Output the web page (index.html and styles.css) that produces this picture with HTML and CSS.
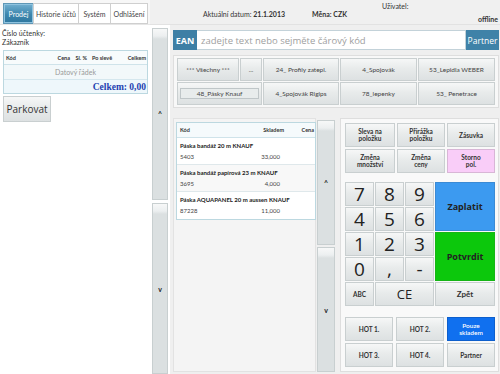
FILE: index.html
```html
<!DOCTYPE html>
<html lang="cs">
<head>
<meta charset="utf-8">
<title>Prodej</title>
<link rel="stylesheet" href="styles.css">
</head>
<body>
<div class="app">
  <header class="top">
    <nav class="tabs">
      <span class="tab active">Prodej</span>
      <span class="tab">Historie účtů</span>
      <span class="tab">Systém</span>
      <span class="tab">Odhlášení</span>
    </nav>
    <div class="info">
      <div class="date">Aktuální datum: <b>21.1.2013</b></div>
      <div class="cur"><b>Měna: CZK</b></div>
      <div class="user"><span>Uživatel:</span><b>offline</b></div>
    </div>
  </header>
  <div class="body">
    <aside class="left">
      <div class="meta">Číslo účtenky:</div>
      <div class="meta">Zákazník</div>
      <div class="bill">
        <div class="bill-head">
          <span class="c1">Kód</span><span class="c2">Cena</span><span class="c3">Sl. %</span><span class="c4">Po slevě</span><span class="c5">Celkem</span>
        </div>
        <div class="bill-row">Datový řádek</div>
        <div class="bill-foot">Celkem: 0,00</div>
      </div>
      <button class="btn park">Parkovat</button>
    </aside>
    <div class="scroll lscroll">
      <div class="sbtn">^</div>
      <div class="sbtn">v</div>
    </div>
    <main class="work">
      <div class="ean">
        <span class="ean-label">EAN</span>
        <span class="ean-input">zadejte text nebo sejměte čárový kód</span>
        <span class="partner">Partner</span>
      </div>
      <div class="cats">
        <button class="btn cat">*** Všechny ***</button>
        <button class="btn cat">...</button>
        <button class="btn cat">24_ Profily zatepl.</button>
        <button class="btn cat">4_Spojovák</button>
        <button class="btn cat">53_Lepidla WEBER</button>
        <button class="btn cat wide"><span class="sel">48_Pásky Knauf</span></button>
        <button class="btn cat">4_Spojovák Rigips</button>
        <button class="btn cat">78_lepenky</button>
        <button class="btn cat">53_ Penetrace</button>
      </div>
      <div class="lower">
        <section class="products">
          <div class="ptable">
            <div class="phead"><span class="pk">Kód</span><span class="ps">Skladem</span><span class="pc">Cena</span></div>
            <div class="prow">
              <div class="pname">Páska bandáž 20 m KNAUF</div>
              <div class="pline"><span class="pk">5403</span><span class="ps">33,000</span><span class="pc"></span></div>
            </div>
            <div class="prow alt">
              <div class="pname">Páska bandáž papírová 23 m KNAUF</div>
              <div class="pline"><span class="pk">3695</span><span class="ps">4,000</span><span class="pc"></span></div>
            </div>
            <div class="prow">
              <div class="pname">Páska AQUAPANEL 20 m aussen KNAUF</div>
              <div class="pline"><span class="pk">87228</span><span class="ps">11,000</span><span class="pc"></span></div>
            </div>
          </div>
        </section>
        <div class="scroll pscroll">
          <div class="sbtn">^</div>
          <div class="sbtn">v</div>
        </div>
        <section class="pad">
          <div class="funcs">
            <button class="btn fn">Sleva na<br>položku</button>
            <button class="btn fn">Přirážka<br>položku</button>
            <button class="btn fn">Zásuvka</button>
            <button class="btn fn">Změna<br>množství</button>
            <button class="btn fn">Změna<br>ceny</button>
            <button class="btn fn storno">Storno<br>pol.</button>
          </div>
          <div class="numpad">
            <button class="btn dig">7</button>
            <button class="btn dig">8</button>
            <button class="btn dig">9</button>
            <button class="btn big pay">Zaplatit</button>
            <button class="btn dig">4</button>
            <button class="btn dig">5</button>
            <button class="btn dig">6</button>
            <button class="btn dig">1</button>
            <button class="btn dig">2</button>
            <button class="btn dig">3</button>
            <button class="btn big ok">Potvrdit</button>
            <button class="btn dig">0</button>
            <button class="btn dig">,</button>
            <button class="btn dig">-</button>
            <button class="btn fn">ABC</button>
            <button class="btn ce">CE</button>
            <button class="btn fn back">Zpět</button>
          </div>
          <div class="hots">
            <button class="btn fn">HOT 1.</button>
            <button class="btn fn">HOT 2.</button>
            <button class="btn fn only">Pouze<br>skladem</button>
            <button class="btn fn">HOT 3.</button>
            <button class="btn fn">HOT 4.</button>
            <button class="btn fn">Partner</button>
          </div>
        </section>
      </div>
    </main>
  </div>
</div>
</body>
</html>
```

FILE: styles.css
```css
* { box-sizing: border-box; }
html, body { margin: 0; padding: 0; }
body {
  width: 500px;
  height: 374px;
  overflow: hidden;
  background: #fff;
  font-family: Lato, "Open Sans", sans-serif;
  color: #333;
  font-size: 7px;
}
.app { width: 500px; height: 374px; display: flex; flex-direction: column; }

/* header */
.top { display: flex; height: 25px; }
.tabs {
  width: 150px;
  display: flex;
  padding: 3px 0 1px 3px;
  background: #f7f7f7;
  border-bottom: 1px solid #e6e6e6;
}
.tab {
  display: flex;
  align-items: center;
  justify-content: center;
  height: 21px;
  border: 1px solid #cfcfcf;
  background: #fff;
  font-size: 7px;
  color: #444;
  margin-right: -1px;
}
.tab:nth-child(1) { width: 31px; }
.tab:nth-child(2) { width: 46px; }
.tab:nth-child(3) { width: 33px; }
.tab:nth-child(4) { width: 38px; }
.tab.active {
  background: linear-gradient(#72afd0, #3d86ad 55%, #2f779f);
  color: #fff;
  border-color: #5f97b6;
  box-shadow: inset 0 0 0 1px #8fc3df;
}
.info {
  flex: 1;
  display: flex;
  background: #f0f0f0;
  border-bottom: 1px solid #e2e2e2;
  padding-left: 53px;
  font-size: 7px;
  color: #333;
}
.date { margin-top: 10px; }
.cur { margin-top: 10px; margin-left: 27px; }
.user {
  margin-left: auto;
  width: 118px;
  display: flex;
  flex-direction: column;
  padding: 2px 2px 0 0;
}
.user b { align-self: flex-end; margin-top: 5px; }

/* body */
.body { flex: 1; display: flex; background: #fff; }
.left { width: 150px; padding: 4px 2px 0 2px; }
.meta { font-size: 7px; line-height: 9px; color: #333; }
.bill {
  margin: 3px 0 0 1px;
  border: 1px solid #bcd8e0;
  background: #f4fafc;
}
.bill-head {
  display: flex;
  height: 14px;
  align-items: center;
  font-weight: 700;
  font-size: 5.5px;
  border-bottom: 1px solid #cfe3ea;
  background: #f7fbfc;
  padding: 0 1px 0 2px;
}
.bill-head .c1 { width: 47px; }
.bill-head .c2 { width: 17px; text-align: right; }
.bill-head .c3 { width: 17px; text-align: right; }
.bill-head .c4 { width: 30px; text-align: center; }
.bill-head .c5 { flex: 1; text-align: right; }
.bill-row {
  height: 15px;
  display: flex;
  align-items: center;
  justify-content: center;
  color: #999;
  font-size: 7px;
  border-bottom: 1px solid #d5e7ee;
  background: #f2f8fa;
}
.bill-foot {
  height: 13px;
  display: flex;
  align-items: center;
  justify-content: flex-end;
  padding-right: 1px;
  font-family: "Liberation Serif", serif;
  font-weight: 700;
  font-size: 9.5px;
  color: #1d3fb0;
  background: #eef7fb;
}

.btn {
  font-family: Lato, "Open Sans", sans-serif;
  border: 1px solid #c9cfd0;
  background: linear-gradient(#f6f7f7, #e8ebeb 45%, #dde1e2);
  color: #333;
  padding: 0;
  margin: 0;
  border-radius: 0;
}
.park {
  display: block;
  width: 48px;
  height: 26px;
  margin: 2px 0 0 1px;
  font-family: "Open Sans", sans-serif;
  font-size: 10px;
}

/* scroll columns */
.scroll { display: flex; flex-direction: column; gap: 3px; }
.lscroll { width: 16px; margin: 3px 2px 0 2px; }
.lscroll .sbtn:first-child { height: 172px; flex: none; }
.sbtn {
  flex: 1;
  display: flex;
  align-items: center;
  justify-content: center;
  border: 1px solid #c8cfd0;
  background: linear-gradient(#f7f8f8 0, #eceff0 7px, #dbe0e1 10px, #dbe0e1 100%);
  font-weight: 700;
  font-size: 7px;
  color: #222;
}

/* work area */
.work {
  width: 330px;
  background: #efefef;
  padding: 5px 1px 2px 3px;
  display: flex;
  flex-direction: column;
}
.ean { display: flex; height: 20px; }
.ean-label {
  width: 24px;
  background: #3d7fa5;
  color: #fff;
  font-weight: 700;
  font-size: 9px;
  font-family: "Open Sans", sans-serif;
  display: flex;
  align-items: center;
  justify-content: center;
}
.ean-input {
  flex: 1;
  background: #fff;
  border: 1px solid #c3d2d9;
  border-left: none;
  display: flex;
  align-items: center;
  padding-left: 4px;
  font-family: "Open Sans", sans-serif;
  font-size: 9.5px;
  color: #a0a0a0;
}
.partner {
  width: 33px;
  background: #3f82a8;
  color: #fff;
  font-family: "Open Sans", sans-serif;
  font-size: 8.5px;
  display: flex;
  align-items: center;
  justify-content: center;
}
.cats {
  margin-top: 5px;
  height: 53px;
  border: 1px solid #dedede;
  background: #f8f8f8;
  padding: 2px 3px;
  display: grid;
  grid-template-columns: 62px 22px 76px 77px 77px;
  grid-template-rows: 23px 23px;
  column-gap: 1px;
  row-gap: 1px;
}
.cat { font-size: 6.5px; color: #444; }
.cat.wide { grid-column: span 2; display: flex; align-items: center; padding: 0 2px; }
.sel {
  flex: 1;
  height: 11px;
  display: flex;
  align-items: center;
  justify-content: center;
  border: 1px solid #bfc6c8;
  background: #e8ecec;
}

.lower { display: flex; margin-top: 10px; flex: 1; }
.products {
  width: 143px;
  background: #f4f4f4;
  border: 1px solid #e2e2e2;
  padding: 3px 0 0 2px;
}
.ptable {
  border: 1px solid #bcd8e0;
  background: #fff;
  margin-right: -1px;
}
.phead {
  display: flex;
  height: 15px;
  align-items: center;
  font-size: 5.5px;
  font-weight: 700;
  background: #f5fafc;
  border-bottom: 1px solid #cfe3ea;
  padding: 0 1px 0 3px;
}
.pk { width: 70px; }
.ps { width: 30px; text-align: right; }
.pc { flex: 1; text-align: right; }
.phead .ps { width: 34px; }
.prow {
  height: 27px;
  padding: 3px 1px 0 3px;
  border-bottom: 1px solid #dfe8eb;
  background: #fff;
}
.prow.alt { background: #f8f8f8; }
.prow:last-child { border-bottom: none; }
.pname { font-size: 6px; font-weight: 700; line-height: 10px; color: #222; }
.pline { display: flex; font-size: 6px; line-height: 12px; color: #444; }

.pscroll { width: 18px; margin: 2px 0 0 1px; gap: 2px; }
.pad {
  width: 159px;
  margin-left: 5px;
  background: #f9f9f9;
  border: 1px solid #dedede;
  padding: 4px 3px 4px 4px;
}
.funcs {
  display: grid;
  grid-template-columns: 50px 48px 48px;
  grid-template-rows: 24px 24px;
  gap: 2px;
}
.fn { font-size: 6.5px; font-weight: 700; line-height: 7px; color: #333; }
.storno { background: #f9cdf8; border-color: #d8b6d6; }
.numpad {
  margin-top: 9px;
  display: grid;
  grid-template-columns: 29px 29px 29px 60px;
  grid-template-rows: repeat(5, 24px);
  gap: 1px;
}
.dig { font-family: "Open Sans", sans-serif; font-size: 19px; line-height: 1; color: #222; }
.big { grid-row: span 2; font-weight: 700; font-size: 9px; color: #222; font-family: "Open Sans", sans-serif; }
.pay { background: #3c9af0; border-color: #3b8ad4; }
.ok { background: #0cc80c; border-color: #16b516; }
.ce { grid-column: span 2; font-family: "Open Sans", sans-serif; font-size: 13px; color: #222; }
.back { font-size: 8px; }
.hots {
  margin-top: 11px;
  display: grid;
  grid-template-columns: 48px 48px 48px;
  grid-template-rows: 24px 24px;
  gap: 2px 3px;
}
.only { background: #1070ef; border-color: #0e5fcc; color: #fff; font-weight: 600; }
```
